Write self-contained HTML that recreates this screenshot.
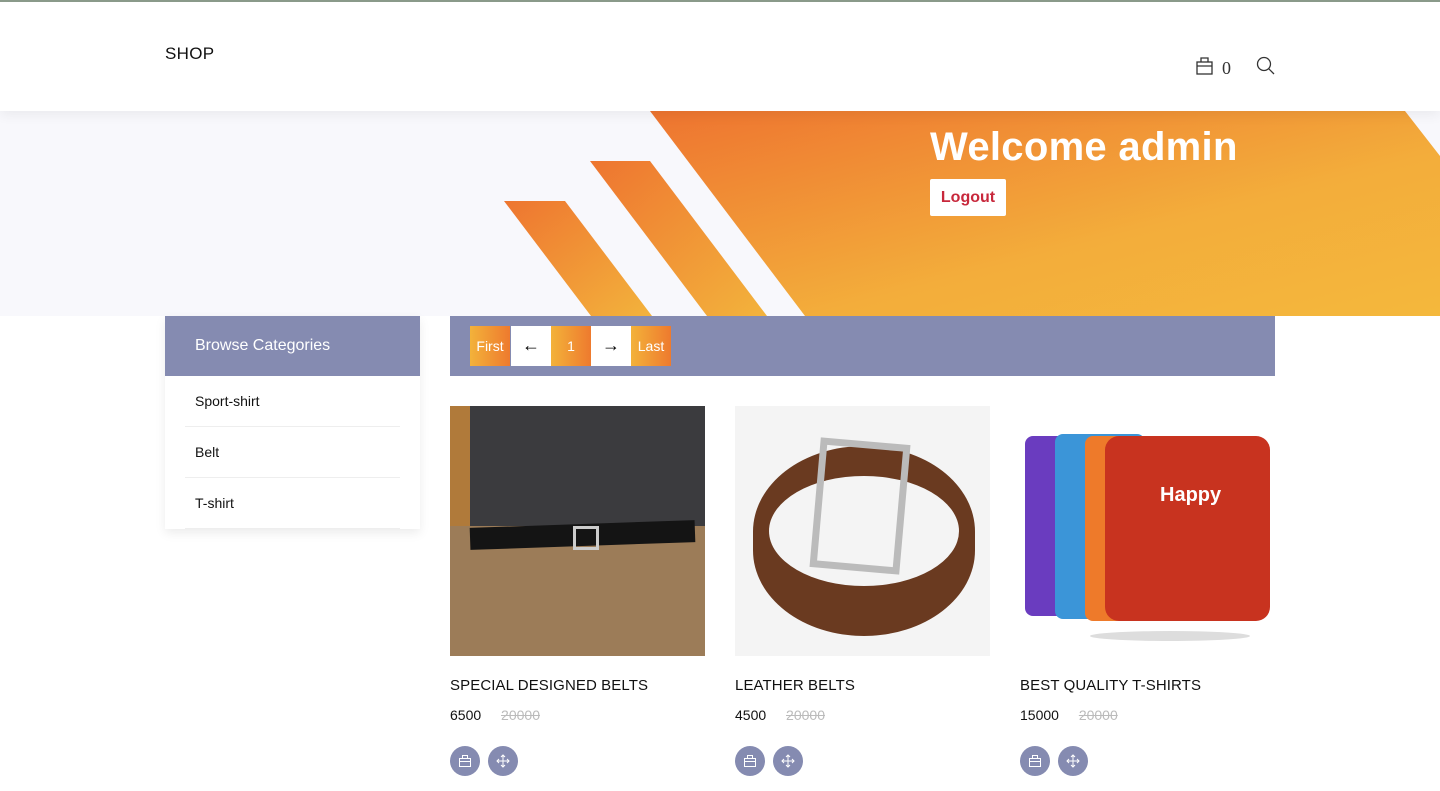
<!DOCTYPE html>
<html><head><meta charset="utf-8"><style>
*{margin:0;padding:0;box-sizing:border-box}
body{width:1440px;height:791px;overflow:hidden;background:#fff;font-family:"Liberation Sans",sans-serif;position:relative}
.hdr{position:absolute;top:0;left:0;width:1440px;height:111px;background:#fff;border-top:2px solid #8a9a8a;box-shadow:0 4px 12px rgba(0,0,0,.06);z-index:2}
.logo{position:absolute;left:165px;top:42px;font-size:17px;color:#111;letter-spacing:.3px}
.ban{position:absolute;top:111px;left:0;width:1440px;height:205px;background:#f8f8fc;overflow:hidden}
.cat{position:absolute;left:165px;top:316px;width:255px;background:#fff;box-shadow:0 4px 10px rgba(0,0,0,.08)}
.cat h3{background:#858bb1;color:#fff;font-weight:normal;font-size:16px;height:60px;line-height:60px;padding-left:30px}
.cat div{margin:0 20px;padding-left:10px;height:51px;line-height:50px;font-size:14px;color:#111;border-bottom:1px solid #eee}
.pbar{position:absolute;left:450px;top:316px;width:825px;height:60px;background:#858bb1}
.pg{position:absolute;top:10px;height:40px;width:40px;line-height:40px;text-align:center;font-size:14px;color:#fff;background:linear-gradient(90deg,#f3b23a,#ee7a2e)}
.pw{background:#fff;color:#000;font-size:18px;line-height:38px}
.card{position:absolute;top:406px;width:255px}
.img{height:250px;position:relative;overflow:hidden}
.t{margin-top:21px;font-size:15px;color:#111;letter-spacing:.1px}
.pr{margin-top:13px;font-size:14px;color:#111}
.pr s{color:#bbb;margin-left:16px}
.ic{margin-top:23px;display:flex;gap:8px}
.ic span{width:30px;height:30px;border-radius:50%;background:#858bb1;display:flex;align-items:center;justify-content:center}
</style></head><body>
<div class="hdr"><div class="logo">SHOP</div>
<svg style="position:absolute;left:1196px;top:54px" width="18" height="20" viewBox="0 0 18 20" fill="none" stroke="#333" stroke-width="1.3"><rect x="1" y="6" width="15" height="12"/><path d="M1 10h15M5 6V2h7v4"/></svg>
<div style="position:absolute;left:1222px;top:56px;font-family:'Liberation Serif',serif;font-size:18px;color:#333">0</div>
<svg style="position:absolute;left:1256px;top:54px" width="20" height="20" viewBox="0 0 20 20" fill="none" stroke="#333" stroke-width="1.3"><circle cx="8" cy="8" r="6.5"/><path d="M12.7 12.7L18 18"/></svg>
</div>
<div class="ban">
<svg width="1440" height="205" style="position:absolute;left:0;top:0">
<defs><linearGradient id="g" x1="0" y1="0" x2="1" y2="1"><stop offset="0" stop-color="#ee7430"/><stop offset=".6" stop-color="#f3ad3b"/><stop offset="1" stop-color="#f4b83c"/></linearGradient>
<linearGradient id="g2" x1="0" y1="0" x2="1" y2="1"><stop offset="0" stop-color="#ee7530"/><stop offset="1" stop-color="#f3b33c"/></linearGradient></defs>
<polygon points="650,0 1405,0 1440,45 1440,205 805,205" fill="url(#g)"/>
<polygon points="504,90 565,90 652,205 591,205" fill="url(#g2)"/>
<polygon points="590,50 650,50 767,205 707,205" fill="url(#g2)"/>
</svg>
<div style="position:absolute;left:930px;top:14px;font-size:40px;font-weight:bold;color:#fff;letter-spacing:.3px">Welcome admin</div>
<div style="position:absolute;left:930px;top:68px;width:76px;height:37px;background:#fff;border-radius:2px;color:#c8283c;font-weight:bold;font-size:16px;line-height:37px;text-align:center">Logout</div>
</div>
<div class="cat"><h3>Browse Categories</h3><div>Sport-shirt</div><div>Belt</div><div>T-shirt</div></div>
<div class="pbar">
<div class="pg" style="left:20px">First</div><div class="pg pw" style="left:61px">←</div><div class="pg" style="left:101px">1</div><div class="pg pw" style="left:141px">→</div><div class="pg" style="left:181px">Last</div>
</div>
<div class="card" style="left:450px"><div class="img" style="background:#3b3b3e">
<div style="position:absolute;left:0;top:0;width:20px;height:250px;background:#b07a3a"></div>
<div style="position:absolute;left:0;top:120px;width:255px;height:130px;background:#9c7c58"></div>
<div style="position:absolute;left:20px;top:118px;width:225px;height:22px;background:#141414;transform:rotate(-2deg)"></div>
<div style="position:absolute;left:123px;top:120px;width:26px;height:24px;border:3px solid #ccc"></div>
</div><div class="t">SPECIAL DESIGNED BELTS</div><div class="pr">6500 <s>20000</s></div><div class="ic"><span><svg width="14" height="14" fill="none" stroke="#fff"><rect x="1.5" y="4.5" width="11" height="8"/><path d="M1.5 7.5h11M4.5 4.5v-3h5v3"/></svg></span><span><svg width="14" height="14" fill="none" stroke="#fff"><path d="M7 1v12M1 7h12M5 3l2-2 2 2M5 11l2 2 2-2M3 5L1 7l2 2M11 5l2 2-2 2"/></svg></span></div></div>
<div class="card" style="left:735px"><div class="img" style="background:#f4f4f4">
<div style="position:absolute;left:18px;top:40px;width:222px;height:190px;border-radius:50% / 45%;background:#6a3a20"></div>
<div style="position:absolute;left:34px;top:70px;width:190px;height:110px;border-radius:50%;background:#f4f4f4"></div>
<div style="position:absolute;left:80px;top:35px;width:90px;height:130px;border:7px solid #bbb;transform:rotate(5deg)"></div>
</div><div class="t">LEATHER BELTS</div><div class="pr">4500 <s>20000</s></div><div class="ic"><span><svg width="14" height="14" fill="none" stroke="#fff"><rect x="1.5" y="4.5" width="11" height="8"/><path d="M1.5 7.5h11M4.5 4.5v-3h5v3"/></svg></span><span><svg width="14" height="14" fill="none" stroke="#fff"><path d="M7 1v12M1 7h12M5 3l2-2 2 2M5 11l2 2 2-2M3 5L1 7l2 2M11 5l2 2-2 2"/></svg></span></div></div>
<div class="card" style="left:1020px"><div class="img" style="background:#fff">
<div style="position:absolute;left:5px;top:30px;width:90px;height:180px;background:#6a3cbf;border-radius:8px"></div>
<div style="position:absolute;left:35px;top:28px;width:90px;height:185px;background:#3b95d8;border-radius:8px"></div>
<div style="position:absolute;left:65px;top:30px;width:90px;height:185px;background:#ee7a2a;border-radius:8px"></div>
<div style="position:absolute;left:95px;top:30px;width:90px;height:185px;background:#49a55a;border-radius:8px"></div>
<div style="position:absolute;left:85px;top:30px;width:165px;height:185px;background:#c8331f;border-radius:14px"></div>
<div style="position:absolute;left:140px;top:78px;color:#fff;font-weight:bold;font-size:20px">Happy</div>
<div style="position:absolute;left:70px;top:225px;width:160px;height:10px;border-radius:50%;background:#ddd"></div>
</div><div class="t">BEST QUALITY T-SHIRTS</div><div class="pr">15000 <s>20000</s></div><div class="ic"><span><svg width="14" height="14" fill="none" stroke="#fff"><rect x="1.5" y="4.5" width="11" height="8"/><path d="M1.5 7.5h11M4.5 4.5v-3h5v3"/></svg></span><span><svg width="14" height="14" fill="none" stroke="#fff"><path d="M7 1v12M1 7h12M5 3l2-2 2 2M5 11l2 2 2-2M3 5L1 7l2 2M11 5l2 2-2 2"/></svg></span></div></div>
</body></html>
